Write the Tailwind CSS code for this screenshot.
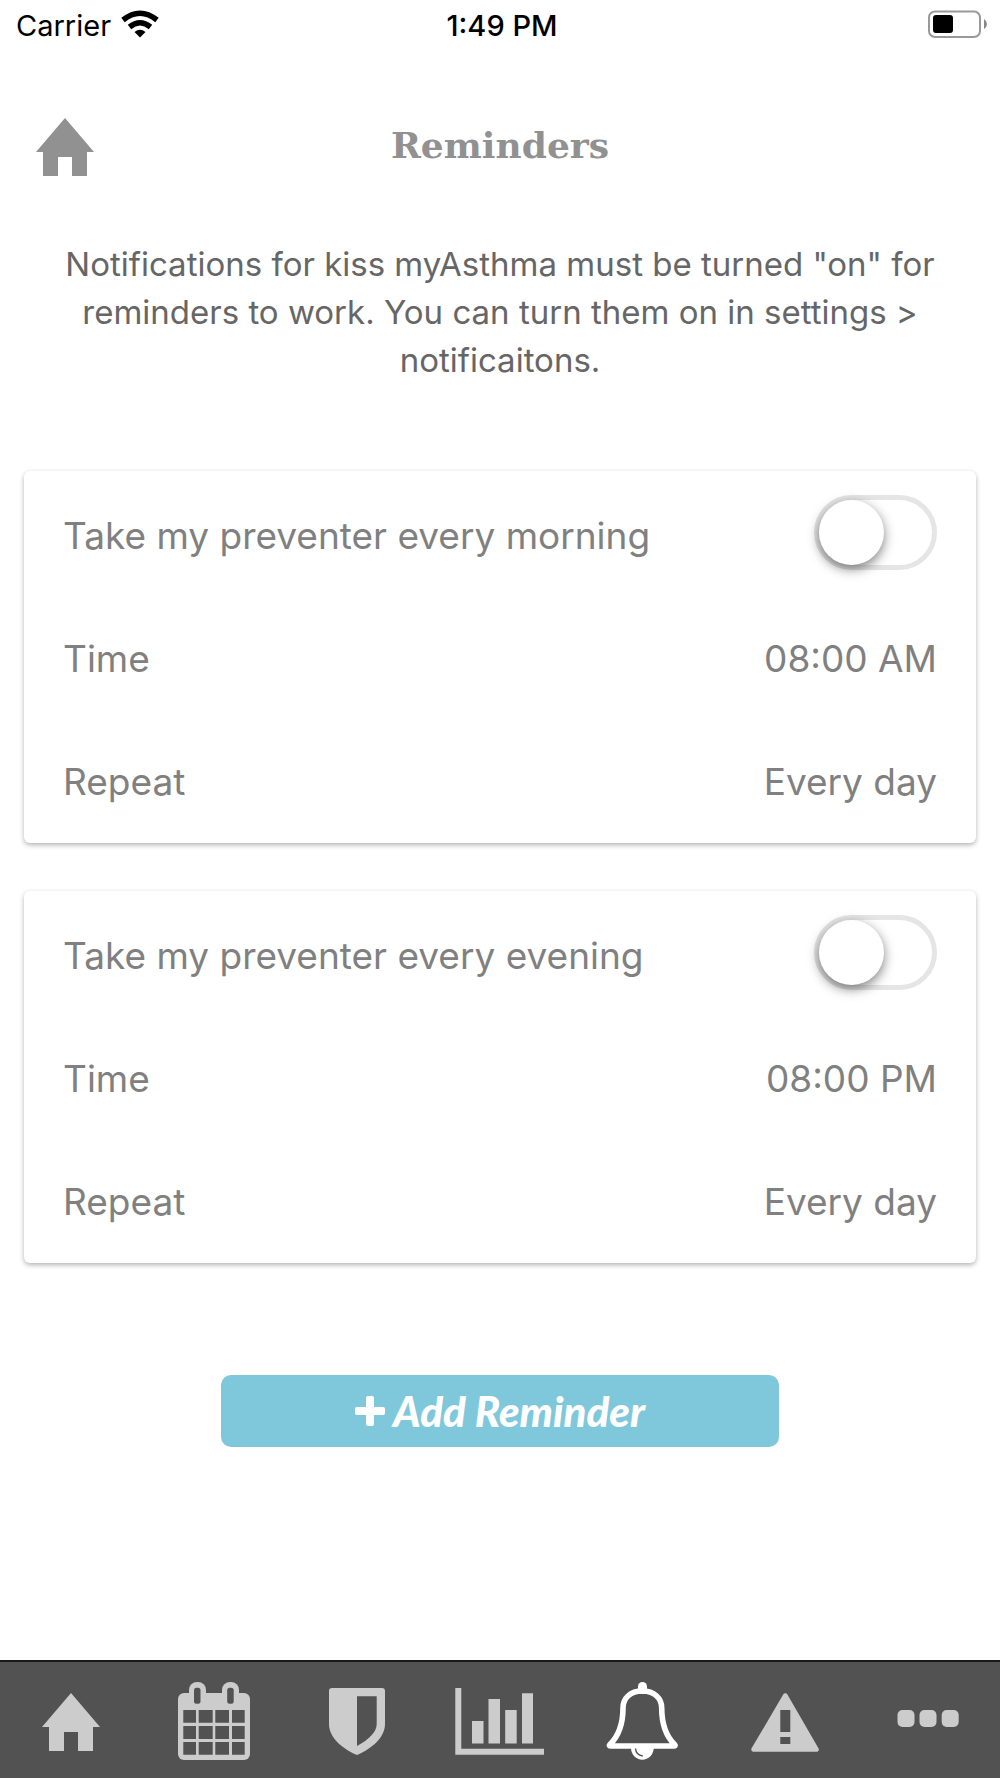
<!DOCTYPE html>
<html lang="en">
<head>
<meta charset="utf-8">
<meta name="viewport" content="width=device-width, initial-scale=1">
<title>Reminders</title>
<script src="https://cdn.jsdelivr.net/npm/@tailwindcss/browser@4"></script>
</head>
<body class="min-h-screen flex flex-col bg-white font-['Inter',sans-serif]">
  <div class="h-12 pl-4 pr-3 grid grid-cols-3 items-center text-[29px] leading-8 text-black">
    <div class="flex items-center gap-2.5">
      <span class="pt-1">Carrier</span>
      <svg class="w-[38px] h-7" viewBox="0 0 38 28" fill="none" stroke="#000" aria-label="Wi-Fi">
        <path d="M2 10Q19-3.500 36 10" stroke-width="5.500"/>
        <path d="M8.500 17Q19 8.500 29.500 17" stroke-width="5.500"/>
        <path d="M13.500 22Q19 17.500 24.500 22L19 27.500Z" fill="#000" stroke="none"/>
      </svg>
    </div>
    <div class="pt-1 text-center font-medium">1:49 PM</div>
    <svg class="w-[60px] h-7 justify-self-end" viewBox="0 0 60 28" aria-label="Battery">
      <rect x="1" y="1.500" width="51" height="25.500" rx="6" fill="none" stroke="#999" stroke-width="2"/>
      <rect x="5" y="5" width="20" height="18" rx="3" fill="#000"/>
      <path d="M56 9q3 2 3 5t-3 5z" fill="#888"/>
    </svg>
  </div>

  <header class="h-48 pt-1.5 px-9 grid grid-cols-[1fr_auto_1fr] items-center">
    <a href="#" aria-label="Home" class="justify-self-start">
      <svg class="w-[58px] h-[58px]" viewBox="0 0 58 58" fill="#919191"><path d="M29 0L58 34H51V58H36V39H22V58H7V34H0Z"/></svg>
    </a>
    <h1 class="pb-1 font-['DejaVu_Serif',serif] font-bold text-[36px] leading-12 text-[#919191]">Reminders</h1>
  </header>

  <main class="flex flex-col">
    <p class="px-14 text-center text-[33px] leading-12 text-[#666]">Notifications for kiss myAsthma must be turned "on" for reminders to work. You can turn them on in settings &gt; notificaitons.</p>

    <div class="mt-[87px] px-6 flex flex-col gap-12 text-[37px] leading-12 text-[#808080]">
      <section class="px-[39px] pb-[3px] rounded-md bg-white shadow-[0_2px_5px_rgba(0,0,0,0.3)]">
        <div class="h-[123px] flex items-center justify-between">
          <label for="morning" class="pt-1.5">Take my preventer every morning</label>
          <input id="morning" type="checkbox" role="switch" class="appearance-none w-[123px] h-[75px] rounded-full border-5 border-[#e5e5e5] before:block before:size-[65px] before:rounded-full before:bg-white before:shadow-[0_4px_12px_rgba(0,0,0,0.5)] checked:before:ml-12">
        </div>
        <div class="h-[123px] pt-1.5 flex items-center justify-between"><span>Time</span><button type="button">08:00 AM</button></div>
        <div class="h-[123px] pt-1.5 flex items-center justify-between"><span>Repeat</span><button type="button">Every day</button></div>
      </section>
      <section class="px-[39px] pb-[3px] rounded-md bg-white shadow-[0_2px_5px_rgba(0,0,0,0.3)]">
        <div class="h-[123px] flex items-center justify-between">
          <label for="evening" class="pt-1.5">Take my preventer every evening</label>
          <input id="evening" type="checkbox" role="switch" class="appearance-none w-[123px] h-[75px] rounded-full border-5 border-[#e5e5e5] before:block before:size-[65px] before:rounded-full before:bg-white before:shadow-[0_4px_12px_rgba(0,0,0,0.5)] checked:before:ml-12">
        </div>
        <div class="h-[123px] pt-1.5 flex items-center justify-between"><span>Time</span><button type="button">08:00 PM</button></div>
        <div class="h-[123px] pt-1.5 flex items-center justify-between"><span>Repeat</span><button type="button">Every day</button></div>
      </section>
    </div>

    <button type="button" class="mt-28 mb-12 w-[558px] max-w-full h-[72px] self-center rounded-[10px] bg-[#7fc8dc] flex items-center justify-center gap-2 text-white font-['Lato',sans-serif] font-black italic text-[42px] leading-12">
      <svg class="w-[30px] h-[30px]" viewBox="0 0 30 30" fill="#fff"><rect x="11" y="0" width="8" height="30" rx="2"/><rect x="0" y="11" width="30" height="8" rx="2"/></svg>
      Add Reminder
    </button>
  </main>

  <nav aria-label="Main" class="mt-auto h-[118px] border-t-2 border-[#181818] bg-[#525252] grid grid-cols-7 justify-items-center">
    <a href="#" aria-label="Home"><svg class="w-[100px] h-[116px]" viewBox="0 0 100 116" fill="#ccc"><path d="M50 31L79 65H72V89H57V70H43V89H28V65H21Z"/></svg></a>
    <a href="#" aria-label="Calendar"><svg class="w-[100px] h-[116px]" viewBox="0 0 100 116" fill="#ccc">
      <rect x="14" y="31" width="72" height="67" rx="6"/>
      <rect x="25" y="20" width="17" height="28" rx="8"/><rect x="58" y="20" width="17" height="28" rx="8"/>
      <g fill="#525252"><rect x="30" y="25.700" width="6.500" height="16" rx="2.500"/><rect x="63.200" y="25.700" width="6.500" height="16" rx="2.500"/>
      <path d="M19.300 48H32V60.700H19.300ZM34.700 48H48.700V60.700H34.700ZM51.300 48H65V60.700H51.300ZM68 48H80.700V60.700H68ZM19.300 64H32V77H19.300ZM34.700 64H48.700V77H34.700ZM51.300 64H65V77H51.300ZM68 64H80.700V77H68ZM19.300 80H32V92.700H19.300ZM34.700 80H48.700V92.700H34.700ZM51.300 80H65V92.700H51.300ZM68 80H80.700V92.700H68Z"/></g>
    </svg></a>
    <a href="#" aria-label="Protection"><svg class="w-[100px] h-[116px]" viewBox="0 0 100 116" fill="#ccc" fill-rule="evenodd"><path d="M25 26H75Q78 26 78 29V62C78 75 66 86 50 93C34 86 22 75 22 62V29Q22 26 25 26ZM50 34.300V84C62 77.500 69.700 70 69.700 62V34.300Z"/></svg></a>
    <a href="#" aria-label="Statistics"><svg class="w-[100px] h-[116px]" viewBox="0 0 100 116" fill="#ccc"><path d="M5.300 26H11.300V86.700H94V92.700H5.300ZM22 59H33.500V81.500H22ZM38.500 37H50V81.500H38.500ZM55.200 48H66.700V81.500H55.200ZM72 31.300H83V81.500H72Z"/></svg></a>
    <a href="#" aria-label="Reminders" aria-current="page"><svg class="w-[100px] h-[116px]" viewBox="0 0 100 116">
      <rect x="45" y="20" width="9" height="12" rx="4.500" fill="#fff"/>
      <path d="M49.300 29C61 29 68.700 36 68.700 46C68.700 63 73 74 81.500 82.500Q83 84 80.500 84H18Q15.500 84 17 82.500C25.500 74 30 63 30 46C30 36 37.500 29 49.300 29Z" fill="none" stroke="#fff" stroke-width="5.600" stroke-linejoin="round"/>
      <path d="M38 86A11.300 11.600 0 0 0 60.700 86Z" fill="#fff"/>
      <path d="M42.500 86.500Q43 93 49.800 94" fill="none" stroke="#525252" stroke-width="1.400"/>
    </svg></a>
    <a href="#" aria-label="Emergency"><svg class="w-[100px] h-[116px]" viewBox="0 0 100 116"><path d="M49.300 33.500L80.500 87.500H17.500Z" fill="#ccc" stroke="#ccc" stroke-width="4.500" stroke-linejoin="round"/><path d="M44.300 48H54.300V70H44.300ZM44.300 75H54.300V82H44.300Z" fill="#525252"/></svg></a>
    <a href="#" aria-label="More"><svg class="w-[100px] h-[116px]" viewBox="0 0 100 116" fill="#ccc"><rect x="18.500" y="48" width="17" height="17" rx="5"/><rect x="40.500" y="48" width="17" height="17" rx="5"/><rect x="62.700" y="48" width="17" height="17" rx="5"/></svg></a>
  </nav>
</body>
</html>
